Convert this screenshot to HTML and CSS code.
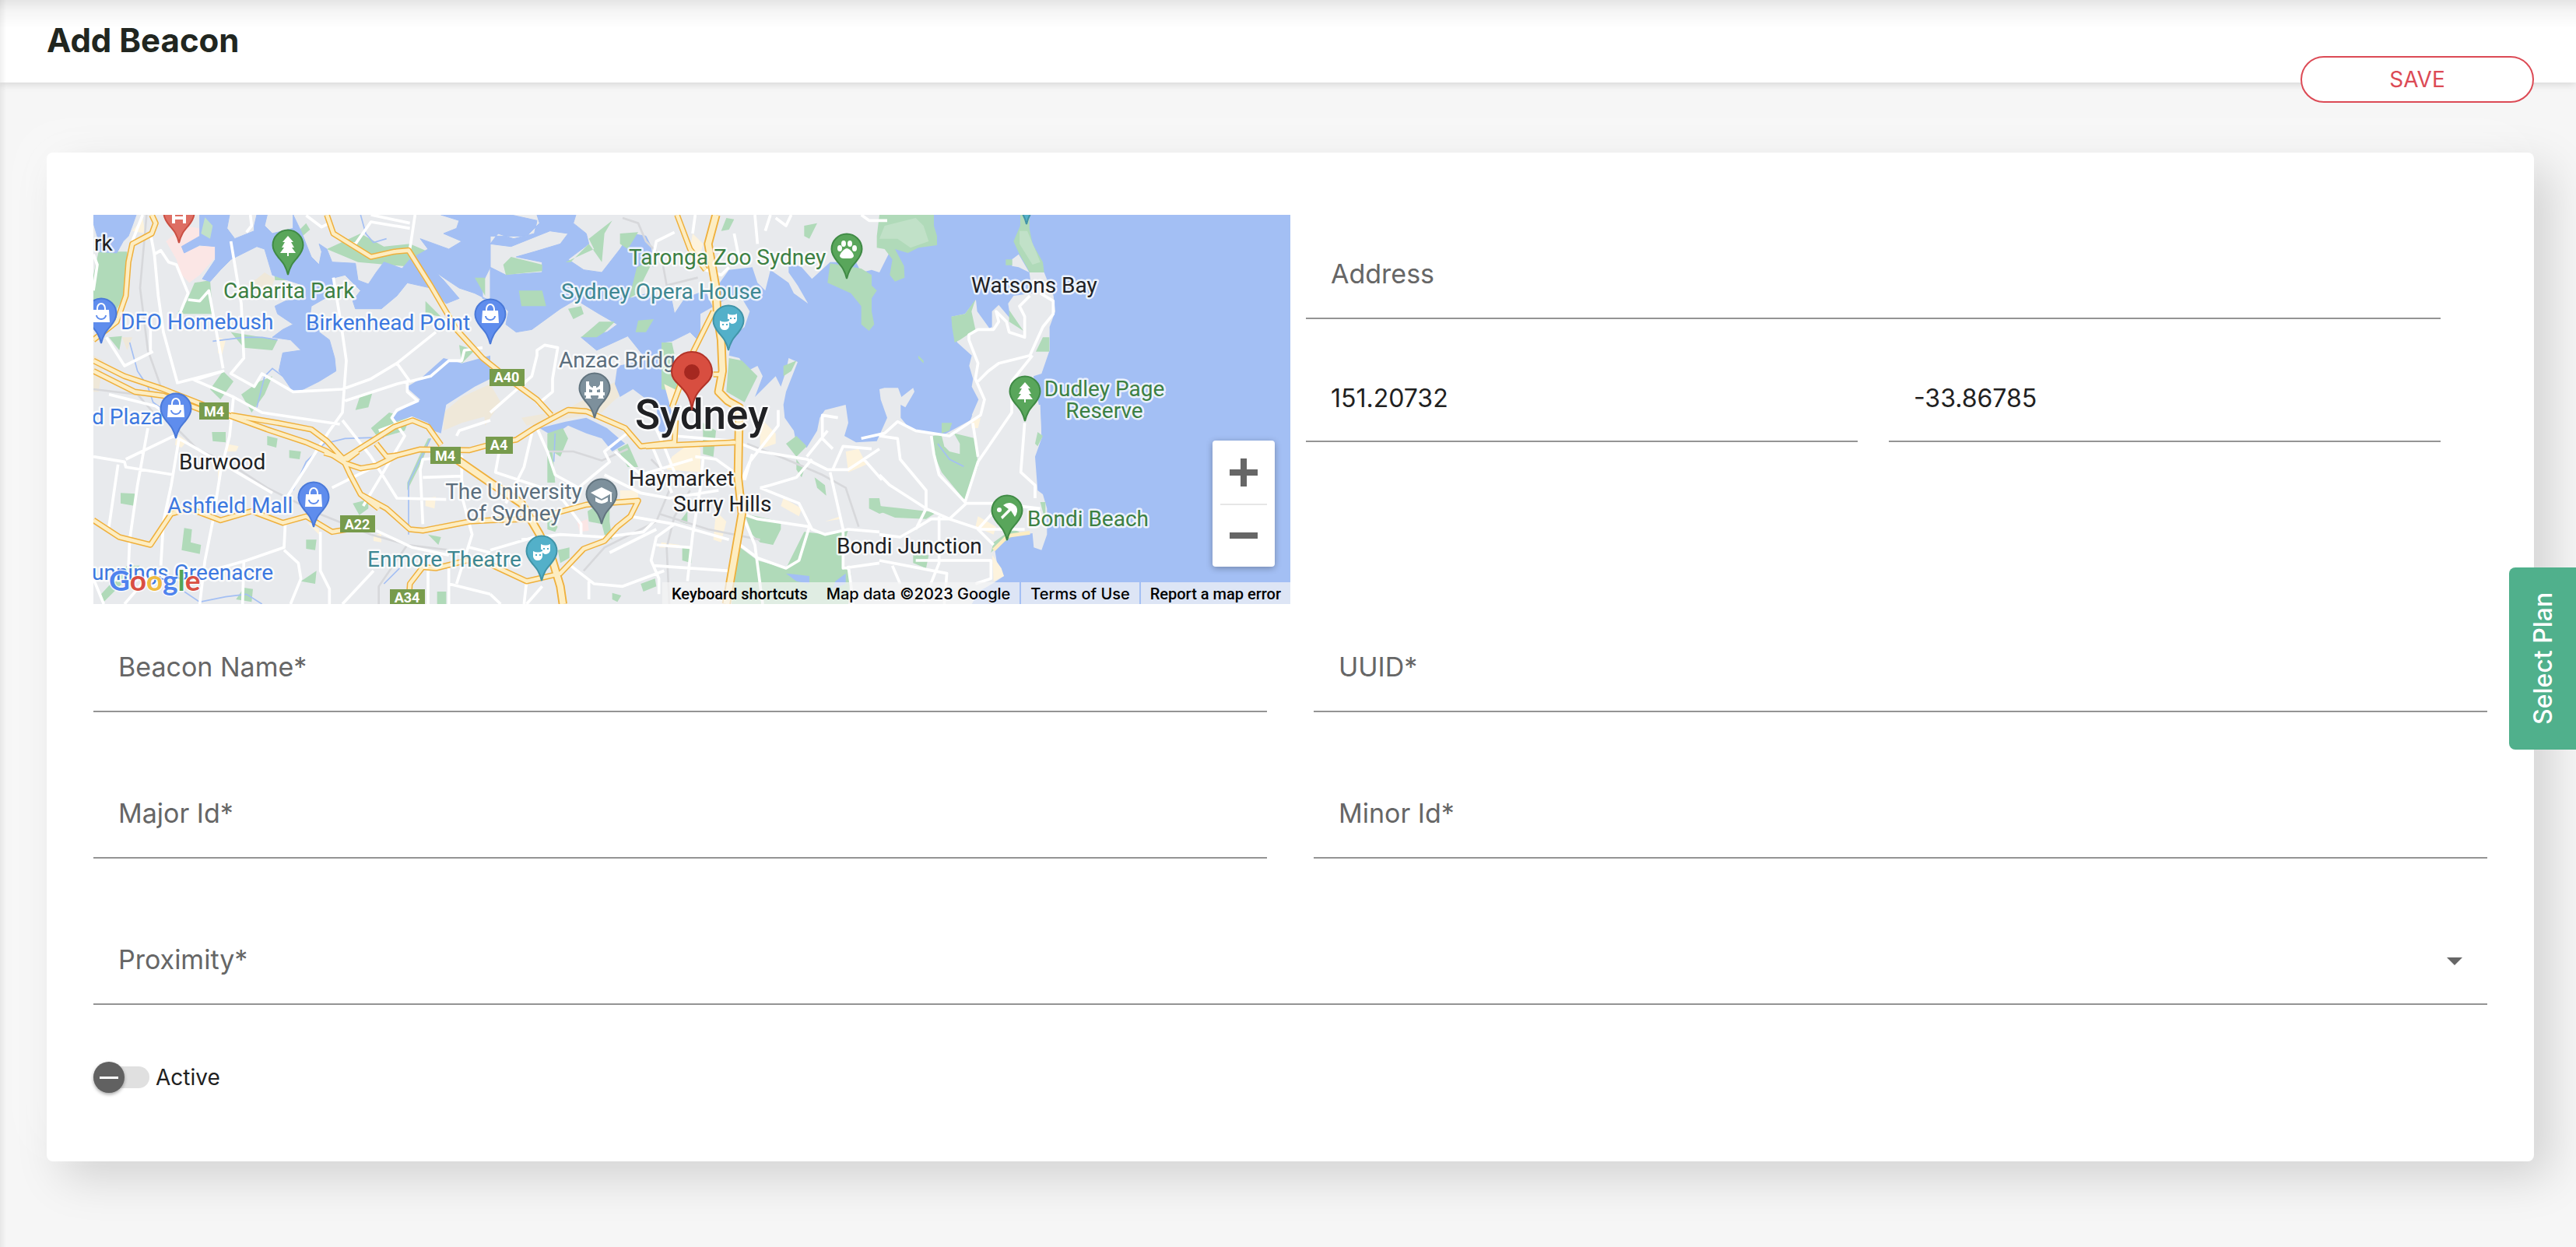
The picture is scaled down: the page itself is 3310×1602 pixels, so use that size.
FILE: index.html
```html
<!DOCTYPE html>
<html lang="en">
<head>
<meta charset="utf-8">
<title>Add Beacon</title>
<link rel="stylesheet" href="styles.css">
</head>
<body>
<header class="topbar">
  <h1 class="title">Add Beacon</h1>
  <button class="save" type="submit" form="beacon">SAVE</button>
</header>
<main class="page">
<form class="card" id="beacon">
  <div class="location">
    <div class="map">
      <svg class="map-canvas" viewBox="120 276 1538 500" preserveAspectRatio="xMidYMid slice" role="img" aria-label="Map of Sydney">
        <defs>
          <path id="pin" d="M0 0C-3-12-6-15-12-22C-17-28-19.500-32-19.500-38A19.500 19.500 0 0 1 19.500-38C19.500-32 17-28 12-22C6-15 3-12 0 0Z"/>
          <g id="bag"><path d="M-10-44H10L11-28H-11Z" fill="#fff"/><path d="M-5-44V-46A5 6 0 0 1 5-46V-44" fill="none" stroke="#fff" stroke-width="2"/><path d="M-6-37A6 5 0 0 0 6-37" fill="none" stroke="#5f8ded" stroke-width="2"/></g>
          <path id="tree" fill="#fff" d="M0-50L7-42H4L8-35H5L10-28H1V-24H-1V-28H-10L-5-35H-8L-4-42H-7Z"/>
          <g id="masks"><path fill="#fff" d="M-1-47Q5-44 11-47V-39Q10-34 4-34L1-36V-40H-1Z M-11-38Q-5-35 1-38V-31Q0-26-5-26T-11-31Z"/><path fill="#4faec8" d="M-8-34h2v2h-2zM-3-34h2v2h-2zM2-42h2v2h-2zM7-42h2v2h-2z"/></g>
          <g id="r1"><path d="M255 18L270 50L255 90L180 130L165 200L155 330L120 430L30 500M30 580L150 640L300 690L440 745L550 790L700 845L850 895L930 930L1000 975L1060 995L1120 985L1200 945L1290 922L1480 925L1590 895L1660 885L1730 840L1860 770L1930 775L2080 840L2140 910L2270 895L2275 810M30 620L190 700L300 715L460 775"/>
          <path d="M560 790L740 820L870 845L930 890L990 955L1020 1020L1060 1095L1160 1150L1250 1230L1300 1235L1480 1200L1560 1195L1730 1190L1930 1135L2130 1120L2100 1180L2050 1220L2000 1275L1920 1305L1830 1400L1700 1430L1560 1365L1470 1350L1350 1380L1300 1375L1250 1440L1245 1518M1000 955L1120 880L1190 835L1260 810L1320 835L1370 905M920 935L1010 960L1050 930M1120 900L1160 950L1200 945M1060 1095L1130 1150"/>
          <path d="M930 18L955 90L1100 180L1190 160L1245 155L1330 290L1430 460L1530 570L1630 650L1740 730L1795 790M30 1195L130 1260L250 1290L330 1170L400 1150L520 1195L640 1160L760 1205L850 1180L950 1240L1010 1230M2280 18L2330 150L2390 230M2420 390L2340 550L2290 680L2260 760M2420 633L2450 633M2380 900L2500 895L2160 910"/></g>
          <g id="r2"><path d="M2430 18L2400 130L2430 300L2435 400L2450 500L2455 620L2440 700L2475 735L2520 760L2515 1030L2530 1170L2470 1518M1430 960L1560 1050L1680 1130L1750 1250L1800 1350L1830 1450L1840 1518"/></g>
        </defs>
        <g transform="translate(110 270) scale(.33333)">
          <path fill="#e8eaed" d="M0 0H4700V1600H0Z"/>
          <path fill="#b0dab9" d="M50 160L160 160L150 330L110 400L30 420V250ZM90 490L140 485L130 540ZM390 350L420 280L480 270L490 400L350 400ZM480 690L530 620L570 660L520 730ZM600 710L670 660L720 640L690 710L640 780ZM1040 770L1060 710L1105 705L1090 760ZM930 150L1060 90L1150 140L1250 130L1320 160L1270 220L1050 200ZM720 180L830 215L800 270L730 270ZM560 470L680 490L740 500L720 540L610 530ZM820 80L850 50L865 75L830 105ZM1310 350L1370 410L1310 400ZM1440 520L1500 540L1450 590ZM487 855L540 855V895L490 890ZM135 1090L193 1093L190 1140L135 1130ZM370 1310L380 1225L410 1230L405 1280L445 1290L440 1325ZM700 870L740 880L735 915L700 905ZM785 925L830 930L825 960L785 955ZM1030 1130L1090 1115L1090 1150L1055 1175ZM850 1270L890 1270L885 1310L850 1305ZM830 1430L890 1390L885 1440ZM610 1455L645 1460L640 1510L580 1500ZM1320 1250L1370 1260L1360 1290ZM1100 840L1170 780L1250 800L1230 850L1130 880ZM1330 880L1300 960L1240 1080L1240 1050L1290 940L1320 880ZM60 1480L160 1370L210 1370L130 1450L70 1510ZM1355 1470L1390 1470L1390 1518H1355Z"/>
          <path fill="#efe8d9" d="M620 285L660 265L690 240L730 265L710 310ZM30 560L70 580L50 700H30ZM1380 780L1450 720L1560 670V790L1450 820L1380 850ZM1530 700L1560 670L1600 740L1540 830ZM140 490L180 490L160 540ZM2080 640L2240 560L2240 600L2100 680L2030 740L1990 780L1700 830L1680 800L1850 770Z"/>
          <path fill="#fbe6e5" d="M310 120L380 60L440 70L440 110L370 145L500 135L510 170L440 250L400 280L370 250L350 190ZM1895 1205L1935 1190L1940 1235L1905 1240Z"/>
          <path fill="#fdf3dd" d="M180 80L220 30L230 90ZM510 490L540 500L525 560L510 550ZM540 900L590 910L580 930L540 930ZM350 860L390 890L370 915L345 905ZM510 960L530 960L520 1040L510 1040ZM850 1200L900 1230L900 1250ZM1110 1255L1140 1245L1140 1280L1110 1275ZM1310 1110L1350 1105L1345 1150L1310 1140Z"/>
          <path fill="#a3bff4" stroke="#a3bff4" stroke-width="3" d="M30 18H195L180 60L165 100L145 120L120 165L50 160L45 100L30 50ZM440 18H555L545 70L575 110L650 80V60L660 18H700L690 60L720 90L800 70V18L830 80L870 180L900 210L910 160L900 130L930 150L950 200L1040 205L1050 270L1090 285L1120 240L1150 200L1220 225L1250 190L1320 150L1290 110L1400 150L1450 120L1380 90L1430 70L1440 40L1370 18H1640L1740 40L1730 90L1650 110L1590 90L1560 130L1640 140L1740 100L1790 80L1860 90L1830 130L1730 160L1660 180L1760 200V240L1620 250L1560 220L1530 280V340L1590 350L1630 390L1620 440L1660 470L1720 460L1830 380L1890 345L1980 400L2050 440L2010 470L1910 490L1970 540L2090 485L2150 560L2220 560V510L2260 505L2330 470L2360 500L2420 380L2400 340L2390 310L2310 340L2270 400L2260 350L2170 320L2100 340L2130 230L2170 200L2230 260L2270 280L2340 270L2200 180L2160 100L2100 90L2060 150L1990 240L1920 230L1860 190L1940 130L1930 90L1880 50L1890 18H1740L1750 50L1700 100H1560V350L1500 320L1440 300L1350 240L1380 270L1440 340L1390 360L1330 300L1240 280L1200 330L1140 380L1040 380L1030 350L1060 310L1000 250L960 260L940 330L870 370L860 440L910 400L900 470L940 500L960 570L965 620L900 660L840 690L800 700L745 620L760 550L830 540L790 500L720 490L760 460L800 440L740 400L730 370L770 350L840 340V290L720 250L690 150L660 140L560 190L520 230L480 275L450 265L500 190V140L440 135L380 165L370 140L440 100Z"/>
          <path fill="#e8eaed" d="M2180 130L2280 60L2400 100L2420 300L2340 290L2250 290L2190 240Z"/>
          <path fill="#a3bff4" d="M1240 680L1290 650L1380 570L1450 590L1560 560V650L1500 680L1390 750L1370 860L1340 850L1320 820L1260 795L1190 815L1180 790L1290 730L1245 690ZM2050 600L2250 560V750H2190L2110 690L2060 720L2040 670ZM1750 840L1850 815L1930 800L2010 840L2080 900L2030 930L1990 880L1930 860L1860 830L1800 870ZM2200 750H2290L2240 870L2210 850Z"/>
          <path fill="#a3bff4" d="M2420 18H4700V1518H2420Z"/>
          <path fill="#e8eaed" d="M2200 18H3090L3120 60V120L3060 240L3030 230L2990 240L2970 200L2870 200L2800 265L2760 220L2710 200L2710 240L2745 290L2785 360L2730 320L2710 280L2640 230L2620 310L2590 280L2570 220L2480 230L2430 300L2350 300L2200 200Z"/>
          <path fill="#e8eaed" d="M2370 1530V400L2440 360L2490 330L2530 340L2560 390L2540 450L2490 490L2480 560L2520 570L2550 620L2590 600L2610 640L2580 720L2660 640L2680 680L2700 620L2710 570L2745 585L2700 700L2690 750L2695 800L2730 850L2740 900L2780 915L2820 850L2830 800L2850 770L2930 750L2940 820L2925 870L2970 895L3050 890L3090 800L3065 730L3060 690L3080 685L3132 685L3145 720L3190 685L3195 700L3160 760L3142 750V800L3175 840L3300 870L3410 810L3435 750H3680L3685 880L3660 950L3670 1080L3690 1095L3706 1150V1250L3685 1310L3655 1300L3650 1245L3555 1260L3505 1310L3515 1370L3540 1410L3495 1440L3442 1470L3410 1530Z"/>
          <path fill="#e8eaed" d="M3571 190L3597 170L3638 240H3695L3731 330L3738 390L3716 450V540L3685 630L3654 640L3680 780L3685 880L3600 900L3416 790L3442 730L3416 680L3421 650L3406 600L3416 560L3360 510L3344 460L3339 410L3390 400L3432 345L3437 390L3484 455L3494 450V390L3520 365L3566 420L3556 360L3577 330L3649 320L3638 240L3597 220L3571 215Z"/>
          <path fill="#b0dab9" d="M3060 18H3270V60L3282 100V135L3210 145L3170 165L3120 150L3155 215L3157 260L3120 275L3100 250L3110 190L3080 150L3050 145V100ZM2870 205L2990 225L3030 250V290L3050 310L3030 340V390L3040 440L3020 465L2990 440L2990 370L2950 320L2860 280ZM3603 18H3638V70L3650 130L3690 200L3695 240L3640 240L3600 170L3577 120L3603 60ZM3547 190H3572V212H3547ZM2480 570L2530 580L2590 640L2540 740L2470 700ZM2690 600L2740 580L2720 620L2690 640ZM2770 60L2820 50L2790 110L2770 100ZM2450 80L2470 30L2500 35L2480 75ZM1850 200L1960 150L1940 110L2030 40L2000 90L1990 200L1940 130L1870 200ZM2060 90L2130 85L2090 150L2060 130ZM2095 340L2125 220L2190 190L2150 270L2130 320ZM1670 310L1760 310L1775 370L1680 370ZM2120 470L2130 425L2190 420L2160 470ZM1860 380L1910 370L1920 400L1880 420ZM1910 490L1980 430L2040 430L2000 470L1970 490ZM1610 210L1640 180L1760 210V235L1620 250ZM1500 260L1540 260V330ZM2700 900L2740 870L2780 910L2740 950ZM2220 510H2260L2280 600V700L2220 690ZM2380 820L2430 850L2420 950L2380 940ZM2050 920L2090 900L2130 990H2090ZM1780 860L1840 840L1860 880L1830 950L1800 930L1810 1050L1780 1050ZM1935 1160L2020 1110V1200L2030 1270L2000 1250L1990 1210L1940 1200ZM1780 1180L1820 1220L1810 1240L1780 1230ZM1820 1310L1865 1300V1340L1830 1360ZM2140 1440L2195 1420L2200 1450L2150 1470ZM2030 1475L2065 1485L2050 1510L2030 1500ZM2300 1300H2335V1360L2300 1350ZM2290 1200L2320 1160V1210ZM2540 1170L2680 1200V1230L2650 1290L2600 1280L2570 1250ZM2510 1290L2590 1350L2700 1380L2770 1240L2860 1250L2940 1230L2920 1300V1370L2950 1400L2940 1518H2490ZM2810 1030L2850 1060L2855 1100L2820 1070ZM3020 1110L3060 1110L3065 1140L3090 1160L3060 1170L3020 1150ZM2740 960L2770 1000L2760 1030L2740 1000Z"/>
          <path fill="#c1e1c8" d="M3080 60L3200 30L3230 60L3250 120L3180 145L3130 110H3060ZM3600 80H3630L3660 150L3680 200L3650 210L3600 130ZM460 28L490 60L480 110L445 90Z"/>
          <path fill="#b0dab9" d="M3337 410L3390 400L3430 345L3415 390L3430 460L3370 500L3350 510L3340 450ZM3690 490H3715V545H3663ZM3560 385L3615 465L3560 430ZM3265 870L3350 860L3430 880L3440 990L3390 1120L3300 1010L3270 940ZM3300 820L3340 820L3330 850L3300 860ZM3670 855L3690 870L3670 910L3660 900ZM3060 1140L3150 1150L3280 1165L3240 1190L3120 1185L3060 1160ZM3190 1330H3250L3240 1380L3190 1360ZM3500 1280L3570 1230L3600 1240L3510 1300L3490 1320ZM3680 1125L3700 1125V1200ZM3210 560L3230 580V590L3210 570Z"/>
          <path fill="#e8eaed" d="M3300 870L3350 865L3370 900V940L3330 930L3310 910Z"/>
          <path fill="#fdf3dd" d="M2340 90L2380 130L2370 170L2330 150ZM2600 800L2660 860V900L2600 920ZM2260 950L2340 890L2370 920V1010L2240 1000ZM2430 1160L2470 1200L2450 1280L2420 1270ZM2930 930L2980 920L3010 980L2940 1010ZM2690 1110L2760 1150L2750 1180L2680 1140ZM3440 1180L3510 1220L3500 1250L3430 1220ZM3415 810L3450 800L3440 840H3415ZM2230 670L2290 700L2260 780ZM2060 1080L2130 1080V1120H2060ZM2220 1280L2290 1290V1300H2210ZM2850 1200L2910 1180V1190ZM3495 1330L3530 1380L3540 1410L3500 1430Z"/>
          <path fill="none" stroke="#fdedc2" stroke-width="14" d="M3500 1310L3555 1255L3640 1243"/>
          <path fill="none" stroke="#a3bff4" stroke-width="5" d="M170 510L200 620L240 680L260 740L300 770M490 505L610 490L680 490L740 500M660 760L690 640L720 610L760 640M800 1080L850 970L920 900L1000 880L1150 875M1245 1250V1050L1330 880M380 1470L440 1510L540 1490L620 1480L680 1518M1150 1440L1220 1370M1060 18L1080 90L1110 125L1160 110M3285 900L3330 960L3385 988M1810 860L1805 970"/>
          <path fill="none" stroke="#d7d8db" stroke-width="8" d="M235 18L210 300L240 540L290 680M350 840L430 920L560 980L700 1070L900 1170L1100 1250L1240 1290L1400 1310M2070 30L2130 50L2160 120L2220 180L2240 290L2360 260M1780 930L1880 930L1990 965L2090 920M2180 960L2240 1020L2250 1080L2200 1200L2000 1300L1920 1390M2250 1518L2240 1300L2270 1180L2330 1080M2550 900L2700 960L2840 1020L2930 1070L2980 1220M2210 1170L2400 1230L2600 1270M1130 1518V1450L1240 1290M30 690L200 710L270 790"/>
          <g fill="none" stroke="#fff" stroke-width="11" stroke-linejoin="round">
            <path d="M220 18L180 120M250 90L265 170L280 330L300 470L355 670M30 170L45 210L30 310M265 170L290 155L320 200L350 210L395 320L350 430M395 345L440 350L475 310L530 610M560 120L600 360L610 570L560 630L650 680L680 630L800 700L990 690L1100 650L1200 590L1350 470M635 18L640 60L620 85M850 20L910 65L940 50M355 665L530 620L420 655L570 720L680 780L980 825M80 490L150 600L260 545M250 430V545M955 260L985 440L1005 580L990 780L940 850L780 1100M1000 735L1200 670L1240 660V700L1280 735L1200 770L1180 800L1230 870L1130 1040L1070 1140M1200 590L1250 660L1330 640L1400 580L1450 580L1460 540L1530 530M990 810L1100 950L1200 1110L1390 1115M1270 18L1250 150M1000 125L1040 130L1100 45L1250 70M1250 50L1100 18M90 710L270 755L330 800M570 720L555 870L520 1010L490 1200L460 1350L440 1518M360 880L330 1060L300 1200L290 1370M240 840L200 1060L170 1270L165 1380M30 950L150 970L155 990L340 1020M125 980L90 1220M155 960L320 880L340 870L430 920L720 1090M770 1200L765 1300L620 1350L480 1390M765 1310L820 1360L830 1420L790 1518M905 1240V1390L940 1460V1518M610 1355L605 1518M30 1420L70 1518M260 1390L150 1518M950 1070L1110 990M1120 1235L1260 1300L1400 1330M1300 1210L1290 1000L1300 960L1450 950V1100L1490 1250L1430 1440M1300 1030L1450 1025M1110 1390L990 1518M1320 1390V1518M1400 1380L1400 1518M1400 1440L1560 1480M1260 800L1130 850M1480 1300L1560 1320"/>
            <path d="M1430 870L1440 850L1560 810M1560 780L1720 640L1740 560V540L1770 520L1820 530L1800 650V700L1740 750M1740 840L1780 930L1810 1020L1900 1070L2020 970L2000 930L2100 850M1720 860L1690 990L1620 1130M1600 900L1580 1010L1820 1090L1910 1210V1260M1680 1270L1830 1250L2000 1260L2150 1240L2190 1200M2000 1020L2140 1090L2250 1110L2440 1080M2040 930L2140 1020L2340 960M2170 780L2230 910L2270 1010M2180 900L2260 1090M2270 870L2500 890L2600 930L2780 960L2860 1000L2940 1000L3060 920M2100 1180L2270 1210L2480 1270M2270 1210L2200 1260L2180 1350L2210 1420V1480M2380 960L2370 1070L2340 1250L2320 1430M2200 1290L2330 1300M2190 1370L2480 1390M2350 950L2430 960L2500 1010M2670 770V830L2560 970L2530 1040M2570 940L2540 1040M2600 1070L2640 1060L2740 1030L2800 960M2600 1070L2750 1130L2800 1230L2850 1250L2940 1230L3060 1240M2530 1170L2590 1190L2790 1220L2750 1350L2700 1380L2590 1340L2510 1280M2530 1170L2580 1290L2610 1518M2900 800L2840 790V880L2880 920M2860 850L2780 950M2870 1010L2920 1230M2880 1000L2920 910L3030 920M2920 1230V1380L3060 1360M2940 1370L2960 1518M3000 960L3070 1040M1760 1450L1700 1518M1700 1430L1690 1518M1560 1480L1600 1518M1870 1370L1960 1440L2070 1450L2230 1390M1940 1430V1500M1730 1260L1560 1310M2020 1320L2200 1230M2190 170L2200 120L2270 85M2350 18L2340 90M2390 230L2450 250L2480 220M2500 90L2520 190M2580 18L2590 130M2640 18L2620 80M2660 30L2700 60L2720 18M2990 18L3020 40H3090M2430 380L2440 350"/>
            <path d="M2990 880L3080 860L3130 815L3200 850L3330 870L3450 790L3465 730L3430 650L3440 590L3405 500L3405 480L3440 460H3500L3520 430L3510 390L3550 430L3560 470L3620 490L3620 410L3600 370L3640 330M3680 320L3730 350V400L3690 450L3640 560L3520 590L3480 620L3440 660M3650 560L3570 660V720L3570 780L3440 970L3390 1125M3620 820L3605 1010L3660 1060V1110M3420 820L3440 950M3260 870L3270 940L3290 1020L3395 1130L3330 1190L3260 1190L3210 1220L3140 1260L3060 1250M3060 870L3130 880L3140 960L3240 1080V1150L3200 1230M3060 1020L3100 1060L3240 1150L3330 1190L3450 1230L3620 1230M3395 1130L3510 1130L3680 1150M3520 1140L3440 1230L3500 1290M3290 1180L3290 1360L3230 1510M3060 1350L3320 1400L3310 1518M3110 1370L3140 1440M3200 1350L3490 1350L3490 1420L3430 1440"/>
          </g>
          <g fill="none" stroke-linejoin="round"><use href="#r1" stroke="#efb03c" stroke-width="23"/><use href="#r2" stroke="#efb03c" stroke-width="34"/><use href="#r1" stroke="#fdedc2" stroke-width="14"/><use href="#r2" stroke="#fdedc2" stroke-width="23"/></g>
          <path fill="#a3bff4" d="M2700 1400L2790 1410L2790 1440L2740 1430ZM2890 1430L2930 1400V1440L2880 1460Z"/>
        </g>
        <g class="shield">
          <path fill="#779b4c" d="M256 517h38v22h-38zM629 474h45v22h-45zM553 574h39v22h-39zM624 561h35v22h-35zM437 662h45v22h-45zM501 757h45v22h-45z"/>
          <text x="275" y="535">M4</text><text x="651" y="491">A40</text><text x="572" y="592">M4</text><text x="641" y="578">A4</text><text x="459" y="680">A22</text><text x="523" y="774">A34</text>
        </g>
        <g class="place">
          <g class="c-town"><text x="121" y="322">rk</text><text x="1248" y="376">Watsons Bay</text><text x="230" y="603">Burwood</text><text x="808" y="624">Haymarket</text><text x="865" y="657">Surry Hills</text><text x="1075" y="711">Bondi Junction</text></g>
          <g class="c-shop"><text x="155" y="423">DFO Homebush</text><text x="393" y="424">Birkenhead Point</text><text x="118" y="545">d Plaza</text><text x="215" y="659">Ashfield Mall</text><text x="118" y="745">unnings Greenacre</text></g>
          <g class="c-park"><text x="287" y="383">Cabarita Park</text><text x="808" y="340">Taronga Zoo Sydney</text><text class="mid" x="1419" y="509">Dudley Page</text><text class="mid" x="1419" y="537">Reserve</text><text x="1320" y="676">Bondi Beach</text></g>
          <g class="c-art"><text x="721" y="384">Sydney Opera House</text><text x="472" y="728">Enmore Theatre</text></g>
          <g class="c-site"><text x="718" y="472">Anzac Bridge</text><text class="mid" x="660" y="641">The University</text><text class="mid" x="660" y="669">of Sydney</text></g>
          <text class="city" x="816" y="551">Sydney</text>
        </g>
        <g stroke-width="2">
          <g fill="#5f8ded" stroke="#4a79d8"><use href="#pin" x="130" y="441"/><use href="#pin" x="630" y="442"/><use href="#pin" x="226" y="563"/><use href="#pin" x="403" y="677"/></g>
          <g fill="#59a65b" stroke="#3f8a45"><use href="#pin" x="370" y="353"/><use href="#pin" x="1088" y="358"/><use href="#pin" x="1317" y="541"/><use href="#pin" x="1294" y="694"/></g>
          <g fill="#53b0c9" stroke="#4194a8"><use href="#pin" x="936" y="450"/><use href="#pin" x="696" y="746"/><use href="#pin" x="1319" y="288"/></g>
          <g fill="#7d909c" stroke="#62747f"><use href="#pin" x="764" y="537"/><use href="#pin" x="773" y="673"/></g>
          <use href="#pin" x="230" y="312" fill="#de6e63" stroke="#ca4f43"/>
        </g>
        <use href="#bag" x="130" y="442"/><use href="#bag" x="630" y="443"/><use href="#bag" x="226" y="564"/><use href="#bag" x="403" y="679"/>
        <use href="#tree" x="370" y="353"/><use href="#tree" x="1317" y="541"/>
        <use href="#masks" x="936" y="450"/><use href="#masks" x="696" y="746"/>
        <path fill="#fff" d="M221 270h4v8h10v-8h4v17h-4v-5h-10v5h-4z"/>
        <g fill="#fff"><ellipse cx="1079" cy="319" rx="3" ry="4"/><ellipse cx="1084" cy="313" rx="3" ry="4"/><ellipse cx="1092" cy="313" rx="3" ry="4"/><ellipse cx="1098" cy="319" rx="3" ry="4"/><path d="M1088 319C1093 320 1097 326 1097 329Q1096 332 1092 332H1084Q1080 332 1079 329C1079 326 1084 320 1088 319Z"/></g>
        <path fill="#fff" fill-rule="evenodd" d="M753 490h4v4q2 4 5 4v-2h4v2q3 0 5-4v-4h4v14h2v4h-2v3h1v1h-8v-1h1v-3h-10v3h1v1h-8v-1h1v-3h-2v-4h2zM757 500v4h4v-3zM771 500l-4 1v3h4z"/>
        <path fill="#fff" d="M759 633L773 626L787 633L773 641ZM765 639L773 643L781 639V644Q773 650 765 644ZM784 634h2v11h-2z"/>
        <g fill="#fff"><circle cx="1284" cy="655" r="3"/><path d="M1289 649Q1298 642 1306 651Q1309 657 1304 664L1299 656L1288 667L1286 664L1296 654Z"/></g>
        <path fill="#d84e40" stroke="#b23328" stroke-width="2" d="M889 527C887 509 880 502 873 495C867 489 863 485 863 478A26 26 0 0 1 915 478C915 485 911 489 905 495C898 502 891 509 889 527Z"/><circle cx="889" cy="478" r="10" fill="#a52820"/>
        <text class="brand" x="140" y="759"><tspan fill="#4f83ee">G</tspan><tspan fill="#d94f42">o</tspan><tspan fill="#f0bb40">o</tspan><tspan fill="#4f83ee">g</tspan><tspan fill="#55a558">l</tspan><tspan fill="#d94f42">e</tspan></text>
      </svg>
      <div class="zoom">
        <button type="button" class="zoom-btn" aria-label="Zoom in"><svg width="36" height="36"><path d="M14 0h8v14h14v8H22v14h-8V22H0v-8h14z"/></svg></button>
        <button type="button" class="zoom-btn" aria-label="Zoom out"><svg width="36" height="36"><path d="M0 14h36v8H0z"/></svg></button>
      </div>
      <div class="credits">
        <button type="button" class="credit plain">Keyboard shortcuts</button>
        <span class="credit">Map data ©2023 Google</span>
        <a class="credit" href="#terms">Terms of Use</a>
        <a class="credit plain" href="#report">Report a map error</a>
      </div>
    </div>
    <div class="coords">
      <div class="field wide"><input id="address" type="text"><label for="address">Address</label></div>
      <div class="field"><input id="lng" type="text" value="151.20732" aria-label="Longitude"></div>
      <div class="field"><input id="lat" type="text" value="-33.86785" aria-label="Latitude"></div>
    </div>
  </div>
  <div class="fields">
    <div class="field"><input id="name" type="text"><label for="name">Beacon Name*</label></div>
    <div class="field"><input id="uuid" type="text"><label for="uuid">UUID*</label></div>
    <div class="field"><input id="major" type="text"><label for="major">Major Id*</label></div>
    <div class="field"><input id="minor" type="text"><label for="minor">Minor Id*</label></div>
    <div class="field wide"><select id="proximity"><option></option></select><label for="proximity">Proximity*</label><svg class="caret" width="20" height="10"><path d="M0 0h20L10 10z"/></svg></div>
  </div>
  <label class="toggle"><input type="checkbox" class="switch">Active</label>
</form>
</main>
<button class="plan" type="button">Select Plan</button>
</body>
</html>
```
FILE: styles.css
```css
* { box-sizing: border-box; }
body {
  margin: 0;
  min-height: 100vh;
  background: #f6f6f6;
  color: #212121;
  font-family: Inter, "Open Sans", sans-serif;
}
/* soft shade along the top and left window edges */
body::before {
  content: "";
  position: fixed;
  inset: 0;
  z-index: 5;
  pointer-events: none;
  background:
    linear-gradient(rgba(0,0,0,.1), rgba(0,0,0,.04) 14px, transparent 36px),
    linear-gradient(90deg, rgba(0,0,0,.06), transparent 8px);
}
button, input, select { font: inherit; color: inherit; margin: 0; border-radius: 0; }
.topbar {
  position: relative;
  z-index: 1;
  display: flex;
  justify-content: space-between;
  align-items: flex-start;
  height: 106px;
  padding: 0 54px 0 60px;
  background: #fff;
  box-shadow: 0 2px 10px rgba(0,0,0,.14);
}
.title { margin: 0; font-size: 42px; line-height: 104px; font-weight: 700; color: #212620; }
.save {
  width: 300px;
  height: 60px;
  margin-top: 72px;
  border: 2px solid #dc4a55;
  border-radius: 30px;
  background: #fff;
  color: #dc4a55;
  font-size: 28px;
}
.page { padding: 90px 54px 108px 60px; }
.card {
  padding: 80px 60px 88px;
  border-radius: 8px;
  background: #fff;
  box-shadow: 20px 20px 60px rgba(0,0,0,.15), -20px -20px 60px rgba(255,255,255,.5);
}
.location { display: grid; grid-template-columns: 1fr 1fr; }
.coords {
  display: grid;
  grid-template-columns: 1fr 1fr;
  align-content: start;
  gap: 46px 40px;
  padding: 22px 60px 0 20px;
}
.fields { display: grid; grid-template-columns: 1fr 1fr; gap: 76px 60px; margin-top: 27px; }
.wide { grid-column: 1 / -1; }
.field { position: relative; height: 112px; border-bottom: 2px solid #949494; }
.field input, .field select {
  width: 100%;
  height: 100%;
  padding: 0 32px;
  border: 0;
  outline: 0;
  background: none;
  appearance: none;
  font-size: 32px;
}
.field label {
  position: absolute;
  left: 32px;
  top: 0;
  font-size: 34px;
  line-height: 108px;
  color: #666;
  pointer-events: none;
}
.caret { position: absolute; right: 32px; top: 51px; fill: #666; pointer-events: none; }

.map { position: relative; height: 500px; overflow: hidden; background: #a3bff4; }
.map-canvas { display: block; width: 100%; height: 100%; }
.map-canvas text { font-family: Roboto, sans-serif; }
.place text { font-size: 28px; stroke: rgba(255,255,255,.8); stroke-width: 5px; stroke-linejoin: round; paint-order: stroke; }
.place .city { font-size: 53px; font-weight: 500; fill: #202124; }
.place .mid { text-anchor: middle; }
.c-town { fill: #202124; }
.c-shop { fill: #3c78e0; }
.c-park { fill: #3c8043; }
.c-art { fill: #3d8792; }
.c-site { fill: #5b6e7d; }
.shield text { font-size: 18px; font-weight: 700; fill: #fff; text-anchor: middle; }
.map-canvas .brand { font-family: Lato, sans-serif; font-size: 37px; font-weight: 700; stroke: rgba(255,255,255,.8); stroke-width: 3px; paint-order: stroke; }
.zoom {
  position: absolute;
  right: 20px;
  bottom: 48px;
  width: 80px;
  border-radius: 4px;
  background: #fff;
  box-shadow: 0 2px 8px rgba(0,0,0,.3);
}
.zoom-btn { display: grid; place-items: center; width: 80px; height: 81px; padding: 0; border: 0; background: none; fill: #666; }
.zoom-btn + .zoom-btn { background: linear-gradient(#e6e6e6, #e6e6e6) center top / 60px 2px no-repeat; }
.credits { position: absolute; right: 0; bottom: 0; display: flex; height: 28px; }
.credit {
  height: 28px;
  padding: 0 12px;
  border: 0;
  background: rgba(245,245,245,.7);
  color: #000;
  font-size: 20px;
  line-height: 30px;
  text-decoration: none;
  font-weight: 500;
}
.credit.plain { font-family: Roboto, sans-serif; }
a.credit { margin-left: 2px; }

.toggle { display: inline-flex; align-items: center; gap: 8px; height: 40px; margin-top: 73px; font-size: 28px; }
.switch {
  position: relative;
  width: 72px;
  height: 28px;
  margin: 0;
  border-radius: 14px;
  background: #e0e0e0;
  appearance: none;
}
.switch::before {
  content: "";
  position: absolute;
  left: 0;
  top: -6px;
  width: 40px;
  height: 40px;
  border-radius: 50%;
  background: linear-gradient(#fff, #fff) center / 24px 3px no-repeat #616161;
  box-shadow: 0 2px 4px rgba(0,0,0,.35);
}
.plan {
  position: fixed;
  right: 0;
  top: 729px;
  width: 86px;
  height: 234px;
  padding: 0;
  border: 0;
  border-radius: 0 8px 8px 0;
  background: #50b08c;
  color: #fff;
  font-size: 32px;
  font-weight: 500;
  writing-mode: vertical-rl;
  rotate: 180deg;
}
```
